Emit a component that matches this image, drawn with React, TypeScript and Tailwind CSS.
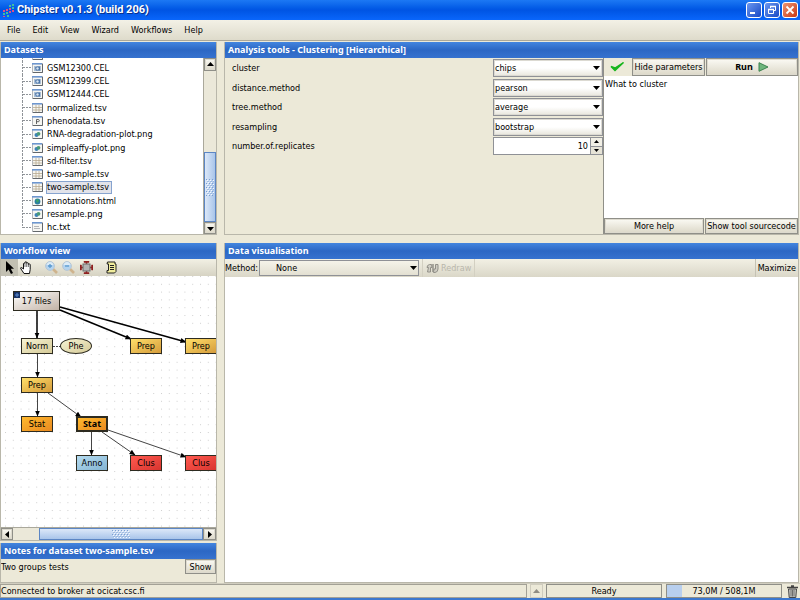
import type { ReactNode } from 'react';

const button =
  'flex items-center justify-center whitespace-nowrap border border-[#8f8f88] bg-linear-to-b from-[#fbfaf4] to-[#dcd8c8] shadow-[inset_0_0_0_1px_#dddace]';

type FileKind = 'cel' | 'table' | 'pheno' | 'image' | 'html' | 'text';

const files: { name?: string; kind: FileKind; selected?: boolean }[] = [
  { kind: 'cel' },
  { name: 'GSM12300.CEL', kind: 'cel' },
  { name: 'GSM12399.CEL', kind: 'cel' },
  { name: 'GSM12444.CEL', kind: 'cel' },
  { name: 'normalized.tsv', kind: 'table' },
  { name: 'phenodata.tsv', kind: 'pheno' },
  { name: 'RNA-degradation-plot.png', kind: 'image' },
  { name: 'simpleaffy-plot.png', kind: 'image' },
  { name: 'sd-filter.tsv', kind: 'table' },
  { name: 'two-sample.tsv', kind: 'table' },
  { name: 'two-sample.tsv', kind: 'table', selected: true },
  { name: 'annotations.html', kind: 'html' },
  { name: 'resample.png', kind: 'image' },
  { name: 'hc.txt', kind: 'text' },
];

function FileIcon({ kind }: { kind: FileKind }) {
  return (
    <svg width="11" height="10" viewBox="0 0 11 10" className="shrink-0">
      <rect x=".5" y=".5" width="10" height="9" fill="#f6f6f2" stroke="#b4b7bb" />
      <path d="M0 .8h10" stroke="#6d96cf" strokeWidth="1.600" />
      <path d="M10.500 1v8.500H1" fill="none" stroke="#63676b" />
      {kind === 'cel' && (
        <>
          <rect x="2" y="3" width="7" height="5" fill="#a9bdd4" />
          <path d="M3 4.500l2-1h3v4H4z" fill="#4d76a8" />
          <circle cx="5.500" cy="5.500" r="1.200" fill="#d5e2ef" />
        </>
      )}
      {kind === 'table' && (
        <path d="M1 4.500h9M1 7h9M4 2v7M7 2v7" stroke="#b9ab90" fill="none" strokeWidth=".8" />
      )}
      {kind === 'pheno' && <path d="M4.500 8V3.500h1.800q1 0 1 1.100t-1 1.100H4.500" stroke="#555" fill="none" strokeWidth=".9" />}
      {kind === 'image' && (
        <>
          <circle cx="4.500" cy="6" r="2" fill="#3d82b8" />
          <circle cx="6.500" cy="4.800" r="1.900" fill="#4b9a78" />
        </>
      )}
      {kind === 'html' && (
        <>
          <circle cx="5.500" cy="5.500" r="2.900" fill="#2c7fa0" />
          <path d="M4 4l2-1 1 2-2 2z" fill="#3ba465" />
        </>
      )}
      {kind === 'text' && <path d="M2 4.500h5M2 6.500h6" stroke="#a3a6aa" fill="none" strokeWidth=".8" />}
    </svg>
  );
}

function Arrow({ dir, className = '' }: { dir: 'up' | 'down' | 'left' | 'right'; className?: string }) {
  const shapes = { up: 'M0 5l3.500-4L7 5z', down: 'M0 2h7L3.500 6z', left: 'M5 0v7L1 3.500z', right: 'M2 0v7l4-3.500z' };
  return (
    <svg width="7" height="7" viewBox="0 0 7 7" className={className}>
      <path d={shapes[dir]} fill="currentColor" />
    </svg>
  );
}

function Grip({ id, width, height }: { id: string; width: number; height: number }) {
  return (
    <svg width={width} height={height}>
      <pattern id={id} width="3" height="4" patternUnits="userSpaceOnUse">
        <path d="M0 0h1v1H0zM1.500 2h1v1h-1z" fill="#7c9fd0" />
        <path d="M1 1h1v1H1zM2 3h1v1H2z" fill="#f5f9ff" />
      </pattern>
      <rect width="100%" height="100%" fill={`url(#${id})`} />
    </svg>
  );
}

function Panel({ title, className = '', children }: { title: string; className?: string; children: ReactNode }) {
  return (
    <section className={`flex min-w-0 flex-col overflow-hidden border-r border-b border-l border-[#b9b7aa] ${className}`}>
      <h2 className="flex h-4 shrink-0 items-center bg-linear-to-b from-[#4385df] via-[#2c67c4] to-[#3672cf] pl-[3px] font-['Noto_Sans',sans-serif] text-[9px] font-bold text-white">
        {title}
      </h2>
      {children}
    </section>
  );
}

function Datasets() {
  return (
    <Panel title="Datasets" className="w-[217px] shrink-0">
      <div className="flex min-h-0 flex-1 bg-white">
        <div className="flex min-w-0 flex-1 flex-col justify-end overflow-hidden">
          <ul className="flex h-[186px] shrink-0 flex-col pl-[21px]">
            {files.map((file, i) => (
              <li key={i} className="flex flex-1">
                <svg width="10" height="13" className="shrink-0 overflow-visible">
                  <path d={i === files.length - 1 ? 'M.5 0v7' : 'M.5 0v14'} stroke="#8f9398" strokeDasharray="2 1" />
                  <path d="M1 6.500h9" stroke="#8f9398" strokeDasharray="2 1" />
                </svg>
                <span className="flex items-center">
                  <FileIcon kind={file.kind} />
                  {file.name && (
                    <span
                      className={`ml-[3px] flex h-[13px] items-center border pr-[2px] ${
                        file.selected ? 'border-[#86a3cf] bg-[#e2e3ea]' : 'border-transparent'
                      }`}
                    >
                      {file.name}
                    </span>
                  )}
                </span>
              </li>
            ))}
          </ul>
        </div>
        <div className="flex w-[13px] shrink-0 flex-col border-l border-[#aaa89b] bg-[#ebe8d9]">
          <button aria-label="Scroll up" className={`${button} h-[13px]`}>
            <Arrow dir="up" />
          </button>
          <div className="flex-1" />
          <div className="flex h-[70px] items-center justify-center border border-[#5c86c4] bg-linear-to-r from-[#dce8f8] to-[#a9c5ea]">
            <Grip id="grip-tall" width={8} height={17} />
          </div>
          <button aria-label="Scroll down" className={`${button} h-3`}>
            <Arrow dir="down" />
          </button>
        </div>
      </div>
    </Panel>
  );
}

const selects = [
  { name: 'cluster', value: 'chips' },
  { name: 'distance.method', value: 'pearson' },
  { name: 'tree.method', value: 'average' },
  { name: 'resampling', value: 'bootstrap' },
];

function AnalysisTools() {
  return (
    <Panel title="Analysis tools - Clustering [Hierarchical]" className="flex-1">
      <div className="flex min-h-0 flex-1">
        <form className="flex min-w-0 flex-1 items-start border-r border-[#8f8f88] pl-[7px]">
          <div className="mt-px flex h-24 flex-1 flex-col justify-between">
            {selects.map(({ name, value }) => (
              <div key={name} className="flex h-[18px] items-center">
                <label htmlFor={name} className="flex-1">
                  {name}
                </label>
                <div className="relative h-full w-[110px]">
                  <select
                    id={name}
                    className="h-full w-full appearance-none border border-[#8f9196] bg-linear-to-b from-white from-50% to-[#e8e6dc] pl-px shadow-[inset_0_0_0_1px_#dcdad2] outline-none"
                  >
                    <option>{value}</option>
                  </select>
                  <Arrow dir="down" className="pointer-events-none absolute top-[5px] right-[3px]" />
                </div>
              </div>
            ))}
            <div className="flex h-[18px] items-center">
              <label htmlFor="replicates" className="flex-1">
                number.of.replicates
              </label>
              <div className="flex h-full w-[110px] border border-[#8f9196] bg-white">
                <input id="replicates" defaultValue="10" className="min-w-0 flex-1 pr-[2px] text-right outline-none" />
                <div className="flex w-3 flex-col border-l border-[#8f9196]">
                  <button type="button" aria-label="Increase" className="flex flex-1 items-center justify-center bg-[#f1efe5]">
                    <svg width="5" height="3">
                      <path d="M0 3l2.500-3L5 3z" />
                    </svg>
                  </button>
                  <button
                    type="button"
                    aria-label="Decrease"
                    className="flex flex-1 items-center justify-center border-t border-[#8f9196] bg-[#e6e3d6]"
                  >
                    <svg width="5" height="3">
                      <path d="M0 0h5L2.500 3z" />
                    </svg>
                  </button>
                </div>
              </div>
            </div>
          </div>
        </form>
        <div className="flex w-[194px] shrink-0 flex-col">
          <div className="flex h-[18px] gap-px">
            <div className="flex w-[27px] items-center justify-center">
              <svg width="15" height="12" viewBox="0 0 15 12">
                <path d="M1 5.500l4 4L13.500 1.500 5 7z" fill="#17b51c" stroke="#17b51c" strokeWidth="1.400" />
              </svg>
            </div>
            <button className={`${button} w-[73px]`}>Hide parameters</button>
            <button className={`${button} flex-1 gap-[5px] font-['Noto_Sans',sans-serif] font-bold`}>
              Run
              <svg width="11" height="10" viewBox="0 0 11 10">
                <path d="M1 .7v8.600L10 5z" fill="#6fb57c" stroke="#3d8350" />
              </svg>
            </button>
          </div>
          <div className="flex-1 bg-white px-px pt-[2px]">What to cluster</div>
          <div className="flex h-4 gap-px">
            <button className={`${button} flex-1`}>More help</button>
            <button className={`${button} w-[93px]`}>Show tool sourcecode</button>
          </div>
        </div>
      </div>
    </Panel>
  );
}

const nodeColors = {
  files: 'bg-linear-to-br from-white to-[#c2b3a6]',
  norm: 'bg-linear-to-br from-[#f6f3d4] to-[#d6cb98]',
  prep: 'bg-linear-to-br from-[#ffdf69] to-[#d59c3c]',
  stat: 'bg-linear-to-br from-[#ffb92e] to-[#e98a20]',
  anno: 'bg-linear-to-br from-[#b5dcf1] to-[#84b4d2]',
  clus: 'bg-linear-to-br from-[#ff5a50] to-[#d9342f]',
};

const nodes: { label: string; x: number; y: number; kind: keyof typeof nodeColors; shape?: string }[] = [
  { label: '17 files', x: 12, y: 15, kind: 'files', shape: 'h-5 w-[47px] border' },
  { label: 'Norm', x: 20, y: 62, kind: 'norm' },
  { label: 'Phe', x: 59, y: 62, kind: 'norm', shape: 'h-4 w-8 rounded-[50%] border' },
  { label: 'Prep', x: 129, y: 62, kind: 'prep' },
  { label: 'Prep', x: 184, y: 62, kind: 'prep' },
  { label: 'Prep', x: 20, y: 101, kind: 'prep' },
  { label: 'Stat', x: 20, y: 140, kind: 'stat' },
  { label: 'Stat', x: 75, y: 140, kind: 'stat', shape: "h-4 w-8 border-2 font-['Noto_Sans',sans-serif] font-bold" },
  { label: 'Anno', x: 75, y: 179, kind: 'anno' },
  { label: 'Clus', x: 129, y: 179, kind: 'clus' },
  { label: 'Clus', x: 184, y: 179, kind: 'clus' },
];

function Workflow() {
  return (
    <Panel title="Workflow view" className="flex-1">
      <div className="flex h-[17px] shrink-0 items-center bg-linear-to-b from-[#f2f0e4] to-[#d6d3c3]">
        <button aria-label="Select" className="flex h-full w-[17px] items-center justify-center bg-[#c2c0b2]">
          <svg width="10" height="13" viewBox="0 0 10 13">
            <path d="M1 0v11l2.600-2.500L6 13l2-1-2.200-4.300H9z" />
          </svg>
        </button>
        <button aria-label="Pan" className="flex w-[17px] items-center justify-center">
          <svg width="13" height="13" viewBox="0 0 13 13">
            <path
              d="M4 12.500L1 8q-1-1.500.5-1.500L3.500 8V2.500q.9-1 1.500 0V1.200q1-.9 1.700 0v1q1-.9 1.700 0v1.200q1-.8 1.800 0v5L9.500 12.500z"
              fill="#fff"
              stroke="#111"
            />
            <path d="M5 2.500V6M6.700 2v4M8.400 3v3" stroke="#333" strokeWidth=".7" />
          </svg>
        </button>
        {['Zoom in', 'Zoom out'].map((label, i) => (
          <button key={label} aria-label={label} className={`flex w-[17px] items-center justify-center ${i ? '' : 'ml-2'}`}>
            <svg width="13" height="13" viewBox="0 0 13 13">
              <path d="M8 8l4 4" stroke="#cfb48e" strokeWidth="2.600" />
              <circle cx="5" cy="5" r="4.400" fill="#b4d3ee" stroke="#b7c6d3" />
              <path d="M1.500 4q1-3 3.500-3t3.500 3z" fill="#dcebf7" />
              <path d={i ? 'M3 5h4' : 'M3 5h4M5 3v4'} stroke="#5a9ad0" strokeWidth="1.300" />
            </svg>
          </button>
        ))}
        <button aria-label="Fit to view" className="flex w-[18px] items-center justify-center">
          <svg width="13" height="13" viewBox="0 0 13 13">
            <path d="M4 0h5v1.500H7.500L6.500 3.500l-1-2H4zM4 13h5v-1.500H7.500l-1-2-1 2H4zM0 4v5h1.500V7.500l2-1-2-1V4zM13 4v5h-1.500V7.500l-2-1 2-1V4z" fill="#8f2020" stroke="#8f2020" strokeWidth=".5" />
            <rect x="3" y="3" width="7" height="7" fill="#b3b3b3" stroke="#6b6b6b" />
          </svg>
        </button>
        <button aria-label="History" className="ml-2 flex w-4 items-center justify-center">
          <svg width="11" height="13" viewBox="0 0 11 13">
            <path d="M1.500 1h7.500v2h1v7.500L8.500 12H1V9.500h1.500V3H1z" fill="#f1ed9c" stroke="#222" />
            <path d="M4 4.500h4M4 6.500h4M4 8.500h4" stroke="#222" />
          </svg>
        </button>
      </div>
      <div className="relative min-h-0 flex-1 overflow-hidden bg-white">
        <svg className="h-full w-full">
          <defs>
            <pattern id="dots" x="4" y="0" width="7.800" height="7.800" patternUnits="userSpaceOnUse">
              <rect width="1" height="1" fill="#d0d0d0" />
            </pattern>
            <marker id="head" markerUnits="userSpaceOnUse" markerWidth="7" markerHeight="7" refX="5.500" refY="2.500" orient="auto">
              <path d="M0 0l6 2.500L0 5z" />
            </marker>
          </defs>
          <rect width="100%" height="100%" fill="url(#dots)" />
          <g stroke="#000" strokeWidth="1.500">
            <path d="M36 35v27" markerEnd="url(#head)" />
            <path d="M59 34L130 63" markerEnd="url(#head)" />
            <path d="M59 31L185 66" markerEnd="url(#head)" />
          </g>
          <g stroke="#444">
            <path d="M36.500 78v23" markerEnd="url(#head)" />
            <path d="M36.500 117v23" markerEnd="url(#head)" />
            <path d="M47 117l33 24" markerEnd="url(#head)" />
            <path d="M90.500 156v23" markerEnd="url(#head)" />
            <path d="M101 156l33 23" markerEnd="url(#head)" />
            <path d="M107 154l78 27" markerEnd="url(#head)" />
            <path d="M52 70.500h8" strokeDasharray="2 1" />
          </g>
        </svg>
        {nodes.map(({ label, x, y, kind, shape = 'h-4 w-8 border' }, i) => (
          <div
            key={i}
            style={{ left: x, top: y }}
            className={`absolute flex items-center justify-center border-[#2d2b20] ${shape} ${nodeColors[kind]}`}
          >
            {kind === 'files' && (
              <svg width="6" height="6" className="absolute top-0 left-0">
                <rect width="6" height="6" fill="#173265" />
                <path d="M1 3h4M3 1v4" stroke="#5c8bd0" />
              </svg>
            )}
            {label}
          </div>
        ))}
      </div>
      <div className="flex h-[13px] shrink-0 border-t border-[#aaa89b] bg-[#ebe8d9]">
        <button aria-label="Scroll left" className={`${button} w-3`}>
          <Arrow dir="left" />
        </button>
        <div className="w-[26px]" />
        <div className="flex flex-1 items-center justify-center border border-[#5c86c4] bg-linear-to-b from-[#dce8f8] to-[#a9c5ea]">
          <Grip id="grip-wide" width={18} height={8} />
        </div>
        <button aria-label="Scroll right" className={`${button} w-[13px]`}>
          <Arrow dir="right" />
        </button>
      </div>
    </Panel>
  );
}

function Visualisation() {
  return (
    <Panel title="Data visualisation" className="flex-1">
      <div className="flex h-[18px] shrink-0 items-center bg-linear-to-b from-[#f2f0e4] to-[#dad7c8]">
        <label htmlFor="method" className="w-[34px] whitespace-nowrap">
          Method:
        </label>
        <div className="relative h-4 w-[160px]">
          <select
            id="method"
            className="h-full w-full appearance-none border border-[#8f9196] bg-linear-to-b from-[#f5f3e9] to-[#e3e0d2] pl-4 outline-none"
          >
            <option>None</option>
          </select>
          <Arrow dir="down" className="pointer-events-none absolute top-1 right-[2px]" />
        </div>
        <button disabled className="ml-[3px] flex h-full items-center gap-[2px] border-x border-[#d3d0c2] px-[3px] text-[#b9b7ab]">
          <svg width="13" height="11" viewBox="0 0 13 11">
            <path
              d="M5.500 1.500H3.500Q1 2 1 4.500h1.500L1.500 9h3V4.500H6zM7.500 9.500H9q3-.5 3-3.500V1.500H9.500V6H8z"
              fill="#cfcdc3"
              stroke="#929088"
            />
            <path d="M7 1v8" stroke="#929088" strokeWidth="1.500" />
          </svg>
          Redraw
        </button>
        <button className="ml-auto h-full border-l border-[#c5c2b4] px-[2px]">Maximize</button>
      </div>
      <div className="flex-1 bg-white" />
    </Panel>
  );
}

export default function App() {
  return (
    <div className="flex h-screen flex-col overflow-hidden border-b-2 border-[#3c78cf] bg-[#ece9d8] font-['DejaVu_Sans_Condensed','DejaVu_Sans',sans-serif] text-[9px] leading-[12px] text-black">
      <header className="flex h-5 shrink-0 items-center bg-linear-to-b from-[#1c78f4] via-[#0054e3] to-[#0a66fb] px-[2px]">
        <svg width="13" height="14" viewBox="0 0 13 14">
          <path d="M7 2h2v2H7zM10 1h2v2h-2zM10 4h2v2h-2zM1 10h2v2H1zM4 9h2v2H4zM5 12h2v2H5z" fill="#3fc1a0" />
          <path d="M7 5h2v2H7zM4 6h2v2H4zM1 7h2v2H1zM7 8h2v2H7zM10 7h2v2h-2zM1 13h2v1H1z" fill="#dd4f86" />
        </svg>
        <h1 className="ml-[2px] flex-1 font-['Roboto',sans-serif] text-[11px] font-bold text-white [text-shadow:1px_1px_0_#0a318c]">
          Chipster v0.1.3 (build 206)
        </h1>
        <div className="flex gap-[2px]">
          <button aria-label="Minimize" className="size-4 rounded-[3px] border border-white bg-linear-to-br from-[#6b97f0] to-[#1947c5]">
            <svg width="14" height="14" viewBox="0 0 14 14">
              <path d="M3 10h5" stroke="#fff" strokeWidth="2" />
            </svg>
          </button>
          <button aria-label="Restore" className="size-4 rounded-[3px] border border-white bg-linear-to-br from-[#6b97f0] to-[#1947c5]">
            <svg width="14" height="14" viewBox="0 0 14 14">
              <path d="M5.500 5V3.500h5v4H9M3.500 6.500h5v4h-5z" fill="none" stroke="#fff" />
              <path d="M5 3.500h6M3 6.500h6" stroke="#fff" strokeWidth="1.500" />
            </svg>
          </button>
          <button aria-label="Close" className="size-4 rounded-[3px] border border-white bg-linear-to-br from-[#ee9371] to-[#c6330c]">
            <svg width="14" height="14" viewBox="0 0 14 14">
              <path d="M3.500 3.500l7 7M10.500 3.500l-7 7" stroke="#fff" strokeWidth="1.800" />
            </svg>
          </button>
        </div>
      </header>
      <nav className="flex h-[21px] shrink-0 items-center gap-3 border-b border-[#aca899] bg-linear-to-b from-[#f3f1e6] to-[#dedbcb] pl-[7px]">
        {['File', 'Edit', 'View', 'Wizard', 'Workflows', 'Help'].map((item) => (
          <button key={item}>{item}</button>
        ))}
      </nav>
      <main className="mt-px flex min-h-0 flex-1 flex-col gap-2">
        <div className="flex h-[193px] shrink-0 gap-[7px] pr-px">
          <Datasets />
          <AnalysisTools />
        </div>
        <div className="flex min-h-0 flex-1 gap-[7px] pr-px">
          <div className="flex w-[217px] shrink-0 flex-col gap-[2px]">
            <Workflow />
            <Panel title="Notes for dataset two-sample.tsv" className="h-10 shrink-0">
              <div className="flex items-start justify-between">
                <p className="mt-[2px]">Two groups tests</p>
                <button className={`${button} h-[15px] w-[31px]`}>Show</button>
              </div>
            </Panel>
          </div>
          <Visualisation />
        </div>
      </main>
      <footer className="flex h-[15px] shrink-0 items-stretch border-t border-[#d0cdbf] pr-[2px]">
        <p className="flex flex-1 items-center border border-[#a3a196]">Connected to broker at ocicat.csc.fi</p>
        <button aria-label="Show tasks" className="mx-[3px] flex w-[13px] items-center justify-center border border-[#cfccbe] text-[#8f8d84]">
          <Arrow dir="up" />
        </button>
        <p className="flex w-[116px] items-center justify-center border border-[#8f8f88]">Ready</p>
        <div className="ml-1 flex w-[116px] border border-[#8f8f88] bg-linear-to-r from-[#b8cfee] from-[15px] to-transparent to-[15px]">
          <p className="flex flex-1 items-center justify-center">73,0M / 508,1M</p>
        </div>
        <button aria-label="Collect garbage" className="ml-1 flex w-3 items-center justify-center">
          <svg width="11" height="13" viewBox="0 0 11 13">
            <path d="M0 2.500h11M4 1h3" stroke="#444" strokeWidth="1.400" />
            <path d="M1.500 4h8l-.7 8.500H2.200z" fill="#c9c9c4" stroke="#444" />
            <path d="M4 5v6.500M5.500 5v6.500M7 5v6.500" stroke="#555" strokeWidth=".8" />
          </svg>
        </button>
      </footer>
    </div>
  );
}
